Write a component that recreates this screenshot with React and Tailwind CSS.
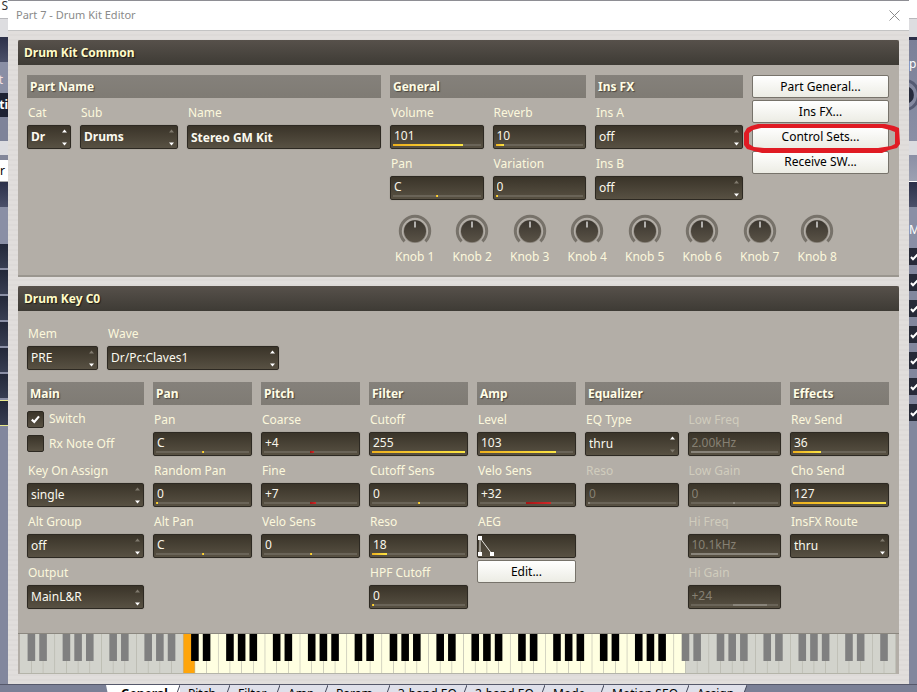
import { useId } from 'react';
import clsx from 'clsx';

const knobs = ['Knob 1', 'Knob 2', 'Knob 3', 'Knob 4', 'Knob 5', 'Knob 6', 'Knob 7', 'Knob 8'];

const tabs = [
  { name: 'General', width: 'w-[74px]', active: true },
  { name: 'Pitch', width: 'w-[50px]' },
  { name: 'Filter', width: 'w-[50px]' },
  { name: 'Amp', width: 'w-[48px]' },
  { name: 'Param', width: 'w-[62px]' },
  { name: '3-band EQ', width: 'w-[77px]' },
  { name: '2-band EQ', width: 'w-[78px]' },
  { name: 'Mode', width: 'w-[59px]' },
  { name: 'Motion SEQ', width: 'w-[85px]' },
  { name: 'Assign', width: 'w-[58px]' },
];

const fieldBox =
  'relative h-6 w-full rounded-xs border border-[#2d2922] bg-linear-to-b from-[#3a3429] to-[#585143] shadow-[0_0_1px_#6d6860]';

// White keys 14..56 (C0..C6) can be assigned
const FIRST_KEY = 14;
const LAST_KEY = 56;
const WHITE_KEYS = 75;

function Field({ label, disabled, className, children }) {
  const id = useId();
  return (
    <div className={className}>
      <label
        htmlFor={id}
        className={clsx('flex h-[27px] items-center whitespace-nowrap pl-px pt-0.5', disabled ? 'text-[#d0ccbd]' : 'text-[#fcf8dc]')}
      >
        {label}
      </label>
      {children(id)}
    </div>
  );
}

// start and size are percentages of the track
function ValueField({ label, value, start = 0, size = 0, color = 'yellow', disabled }) {
  return (
    <Field label={label} disabled={disabled}>
      {(id) => (
        <div className={fieldBox}>
          <input
            id={id}
            defaultValue={value}
            disabled={disabled}
            className={clsx('block h-[18px] w-full bg-transparent pl-[3px] outline-none', disabled ? 'text-[#868073]' : 'text-[#f8f5ea]')}
          />
          <div className="absolute inset-x-[2px] bottom-[2px] flex h-[2px] items-stretch bg-[#6a6458]">
            <div style={{ width: `${start}%` }} />
            <div
              className={clsx(
                'min-w-[2px]',
                disabled && 'bg-[#89847a]',
                !disabled && color === 'yellow' && 'bg-linear-to-r from-[#eeb01c] to-[#fbe444]',
                !disabled && color === 'red' && 'bg-linear-to-r from-[#a51515] to-[#d22a2a]',
              )}
              style={{ width: `${size}%` }}
            />
          </div>
        </div>
      )}
    </Field>
  );
}

function SelectField({ label, value, up = false, down = true, bold, className }) {
  return (
    <Field label={label} className={className}>
      {(id) => (
        <div className={fieldBox}>
          <select
            id={id}
            defaultValue={value}
            className={clsx('block h-[22px] w-full appearance-none bg-transparent pl-[3px] text-[#fbf9ef] outline-none', bold && 'font-bold')}
          >
            <option>{value}</option>
          </select>
          <svg viewBox="0 0 5 17" className="pointer-events-none absolute right-[3px] top-[3px] h-[17px] w-[5px]">
            <path d="M0 3.5 2.5 .5 5 3.5Z" fill={up ? '#fff' : '#807a6e'} />
            <path d="M0 13.5 2.5 16.5 5 13.5Z" fill={down ? '#fff' : '#807a6e'} />
          </svg>
        </div>
      )}
    </Field>
  );
}

function CheckField({ label, checked }) {
  return (
    <label className="flex flex-1 items-center gap-[5px] whitespace-nowrap text-[#fcf8dc]">
      <span className="relative size-[17px]">
        <input
          type="checkbox"
          defaultChecked={checked}
          className="peer block size-full appearance-none rounded-xs border border-[#2d2922] bg-linear-to-b from-[#3a3429] to-[#585143]"
        />
        <svg viewBox="0 0 17 17" className="pointer-events-none absolute inset-0 hidden peer-checked:block">
          <path d="M4.8 8.6 7.3 11 12 5.4" fill="none" stroke="#fff" strokeWidth="2.2" />
        </svg>
      </span>
      {label}
    </label>
  );
}

function SectionTitle({ children }) {
  return (
    <h3 className="flex h-[23px] items-center bg-linear-to-b from-[#85817b] to-[#7f7b74] pl-[3px] font-bold text-[#fffde6] [text-shadow:1px_1px_1px_#4a463f]">
      {children}
    </h3>
  );
}

function Section({ title, children }) {
  return (
    <section className="min-w-0">
      <SectionTitle>{title}</SectionTitle>
      {children}
    </section>
  );
}

function PanelTitle({ children }) {
  return (
    <h2 className="flex h-[25px] items-center rounded-t-xs bg-linear-to-b from-[#57514b] to-[#3e3b35] pl-1.5 font-bold text-[#fffcc8] [text-shadow:1px_1px_1px_#1d1b17]">
      {children}
    </h2>
  );
}

function PushButton({ children }) {
  return (
    <button
      type="button"
      className="block h-[23px] w-full rounded-xs border border-[#77736b] bg-linear-to-b from-white to-[#ecece4] text-center leading-5 text-black"
    >
      {children}
    </button>
  );
}

function Knob({ label }) {
  return (
    <div className="flex flex-col items-center text-[#fcf8dc]">
      <svg viewBox="0 0 34 34" className="size-[34px]" role="slider" aria-label={label} aria-valuenow={64}>
        <defs>
          <linearGradient id="knobFace" x1="0" y1="0" x2="0" y2="1">
            <stop offset="0" stopColor="#3b362f" />
            <stop offset="1" stopColor="#5a5347" />
          </linearGradient>
        </defs>
        <path d="M6.6 27.4A14.7 14.7 0 1 1 27.4 27.4" fill="none" stroke="#77726a" strokeWidth="3" />
        <circle cx="17" cy="17.5" r="11.6" fill="#8f8a82" />
        <circle cx="17" cy="17.3" r="11" fill="url(#knobFace)" />
        <path d="M17 7.5v6" stroke="#fff" strokeWidth="1.2" />
      </svg>
      <span className="flex h-[18px] items-center whitespace-nowrap">{label}</span>
    </div>
  );
}

function Keyboard() {
  const whites = Array.from({ length: WHITE_KEYS }, (_, i) => i);
  const blacks = whites.filter((i) => [0, 1, 3, 4, 5].includes(i % 7) && i < WHITE_KEYS - 1);
  const whiteFill = (i) => {
    if (i === FIRST_KEY) return '#ffa50a';
    return i > FIRST_KEY && i <= LAST_KEY ? '#ffffe1' : '#d2d3cc';
  };

  return (
    <div className="border-t border-[#8b877f] bg-[#b3aea7] pl-[2px] pr-[3px]">
      <svg viewBox="0 0 1500 40" preserveAspectRatio="none" className="block h-10 w-full">
        {whites.map((i) => (
          <g key={i}>
            <rect x={i * 20} width="20" height="40" fill={whiteFill(i)} />
            <rect x={i * 20 + 19} width="1.5" height="40" fill="#b4b4a9" />
          </g>
        ))}
        <rect y="39" width="1500" height="1" fill="#b4b4a9" />
        {blacks.map((i) => (
          <rect
            key={i}
            x={i * 20 + 13}
            width="13"
            height="27"
            fill={i >= FIRST_KEY && i < LAST_KEY ? '#000' : '#808080'}
          />
        ))}
      </svg>
    </div>
  );
}

function LeftEdge() {
  return (
    <div className="flex w-2 shrink-0 flex-col overflow-hidden text-white">
      <div className="flex h-[18px] justify-end bg-white leading-3 text-[#333]">S</div>
      <div className="h-[19px] border-t border-[#b8b8bc] bg-[#dddde0]" />
      <div className="h-[25px] bg-linear-to-b from-[#2c3049] to-[#4b5069]" />
      <div className="flex h-[31px] items-center justify-end bg-[#8a8fa5] pr-[5px] pt-1 text-[#f3dfe0]">t</div>
      <div className="flex h-6 items-center justify-end bg-[#1e2233] font-bold">sti</div>
      <div className="h-6 bg-[#7e8399]" />
      <div className="h-[14px] bg-[#dcdce0]" />
      <div className="h-[5px] bg-[#83879a]" />
      <div className="flex h-[21px] items-center justify-end bg-white pr-[3px] text-black">or</div>
      <div className="h-[26px] border-t border-[#aaa] bg-linear-to-b from-[#2c3049] to-[#4b5069]" />
      <div className="h-[37px] bg-[#8a8fa5]" />
      {[0, 1, 2, 3, 4, 5].map((row) => (
        <div key={row} className="h-[26px] border-b-2 border-[#8a8fa5] bg-linear-to-b from-[#232839] to-[#383e52]" />
      ))}
      <div className="h-[26px] border-y border-[#e9e98a] bg-linear-to-b from-[#232839] to-[#383e52]" />
      <div className="flex-1 bg-[#82879d]" />
    </div>
  );
}

function RightEdge() {
  return (
    <div className="flex w-2 shrink-0 flex-col overflow-hidden text-white">
      <div className="h-[18px] bg-white" />
      <div className="h-[19px] border-t border-[#b8b8bc] bg-[#dddde0]" />
      <div className="h-[3px] bg-[#2c3049]" />
      <div className="flex h-[101px] flex-col bg-linear-to-b from-[#7b8098] to-[#8a8fa5]">
        <span className="h-[38px] pt-4">p</span>
        <svg viewBox="0 0 8 34" className="h-[34px] w-2">
          <path d="M0 3A15 15 0 0 1 0 31" fill="none" stroke="#555b73" strokeWidth="3" />
          <path d="M0 9A9 9 0 0 1 0 25Z" fill="#262b3d" />
        </svg>
      </div>
      <div className="h-[14px] bg-[#dcdce0]" />
      <div className="h-[26px] bg-linear-to-b from-[#8a8fa5] to-[#9da1b2]" />
      <div className="h-[26px] border-t border-white bg-linear-to-b from-[#2c3049] to-[#4b5069]" />
      <div className="flex h-[41px] items-center bg-[#8a8fa5] pt-1">M</div>
      {[0, 1, 2, 3, 4, 5, 6].map((row) => (
        <div key={row} className="h-[26px] bg-[#82879d]">
          <svg viewBox="0 0 8 17" className="h-[17px] w-2 bg-[#262a38]">
            <path d="M2 9 4 11.2 8.5 6.5" fill="none" stroke="#fff" strokeWidth="2" />
          </svg>
        </div>
      ))}
      <div className="flex-1 bg-[#82879d]" />
    </div>
  );
}

function TabBar() {
  return (
    <nav className="flex h-6 shrink-0 border-t border-[#55586a] bg-[#7b8096] pl-[106px]">
      {tabs.map((tab, index) => (
        <a
          key={tab.name}
          href="#"
          className={clsx('relative flex h-6 shrink-0 items-start whitespace-nowrap bg-[#dfe0ea] pl-2 pt-px text-black', tab.width, tab.active && 'bg-white pl-[15px] font-bold')}
        >
          {tab.name}
          {index === 0 && (
            <svg viewBox="0 0 5 24" className="absolute left-0 top-0 h-6 w-[5px]">
              <path d="M0 0 5 24H0Z" fill="#7b8096" />
            </svg>
          )}
          <svg viewBox="0 0 10 24" className="absolute right-0 top-0 h-6 w-2.5">
            {index === tabs.length - 1 && <path d="M10 0 1 24H10Z" fill="#7b8096" />}
            <path d="M10 0 1 24" stroke="#44475a" />
          </svg>
        </a>
      ))}
    </nav>
  );
}

function DrumKitCommon() {
  return (
    <section className="border-b-2 border-[#9a968f] bg-[#b3aea7]">
      <PanelTitle>Drum Kit Common</PanelTitle>
      <div className="grid grid-cols-[354fr_499fr] gap-[9px] pb-[9px] pl-[9px] pr-2.5 pt-2.5">
        <Section title="Part Name">
          <div className="grid grid-cols-[44fr_98fr_194fr] gap-[9px]">
            <SelectField label="Cat" value="Dr" up bold />
            <SelectField label="Sub" value="Drums" bold />
            <Field label="Name">
              {(id) => (
                <div className={fieldBox}>
                  <input
                    id={id}
                    defaultValue="Stereo GM Kit"
                    className="block h-[22px] w-full bg-transparent pl-[3px] font-bold text-[#fbf9ef] outline-none"
                  />
                </div>
              )}
            </Field>
          </div>
        </Section>

        <div className="min-w-0">
          <div className="grid grid-cols-[196fr_148fr_137fr] gap-[9px]">
            <Section title="General">
              <div className="grid grid-cols-2 gap-x-[9px]">
                <ValueField label="Volume" value="101" size={80} />
                <ValueField label="Reverb" value="10" size={10} />
                <ValueField label="Pan" value="C" start={49} />
                <ValueField label="Variation" value="0" />
              </div>
            </Section>
            <Section title="Ins FX">
              <SelectField label="Ins A" value="off" />
              <SelectField label="Ins B" value="off" />
            </Section>
            <div className="flex h-[99px] flex-col justify-between">
              <PushButton>Part General...</PushButton>
              <PushButton>Ins FX...</PushButton>
              <div className="relative">
                <PushButton>Control Sets...</PushButton>
                <svg
                  viewBox="0 0 156 29"
                  preserveAspectRatio="none"
                  className="pointer-events-none absolute -left-2 -top-[2px] h-[29px] w-[calc(100%+19px)] max-w-none"
                >
                  <path
                    fill="#e01b24"
                    fillRule="evenodd"
                    d="M0 9 3 4 7 2 14 0H141L150 2 155 4 156 20 153 24 145 26 138 29H18L10 27 3 25 0 21ZM5 9V20L10 23 20 24H134L147 22 151 20V8L146 6 138 4H17L9 6Z"
                  />
                </svg>
              </div>
              <PushButton>Receive SW...</PushButton>
            </div>
          </div>
          <div className="-ml-1 mt-[14px] grid w-[460px] grid-cols-8">
            {knobs.map((name) => (
              <Knob key={name} label={name} />
            ))}
          </div>
        </div>
      </div>
    </section>
  );
}

function DrumKey() {
  return (
    <section className="bg-[#b3aea7]">
      <PanelTitle>Drum Key C0</PanelTitle>
      <div className="pb-6 pl-[9px] pr-2.5 pt-2">
        <div className="flex gap-[9px]">
          <SelectField label="Mem" value="PRE" className="w-[71px]" />
          <SelectField label="Wave" value="Dr/Pc:Claves1" up className="w-[172px]" />
        </div>

        <div className="mt-3 grid grid-cols-[117fr_99fr_99fr_99fr_99fr_196fr_99fr] gap-[9px]">
          <Section title="Main">
            <div className="flex h-[51px] flex-col pt-0.5">
              <CheckField label="Switch" checked />
              <CheckField label="Rx Note Off" />
            </div>
            <SelectField label="Key On Assign" value="single" />
            <SelectField label="Alt Group" value="off" />
            <SelectField label="Output" value="MainL&R" />
          </Section>

          <Section title="Pan">
            <ValueField label="Pan" value="C" start={49} />
            <ValueField label="Random Pan" value="0" />
            <ValueField label="Alt Pan" value="C" start={49} />
          </Section>

          <Section title="Pitch">
            <ValueField label="Coarse" value="+4" start={49} size={5} color="red" />
            <ValueField label="Fine" value="+7" start={49} size={7} color="red" />
            <ValueField label="Velo Sens" value="0" start={49} />
          </Section>

          <Section title="Filter">
            <ValueField label="Cutoff" value="255" size={100} />
            <ValueField label="Cutoff Sens" value="0" start={49} />
            <ValueField label="Reso" value="18" size={16} />
            <ValueField label="HPF Cutoff" value="0" />
          </Section>

          <Section title="Amp">
            <ValueField label="Level" value="103" size={82} />
            <ValueField label="Velo Sens" value="+32" start={49} size={27} color="red" />
            <Field label="AEG">
              {(id) => (
                <div id={id} className={fieldBox}>
                  <svg viewBox="0 0 18 22" className="block h-[22px] w-[18px]">
                    <path d="M2 19V3L14 19" fill="none" stroke="#e8e6e0" />
                    <path d="M0 1h4v4H0ZM0 17h4v4H0ZM12 17h4v4h-4Z" fill="#fff" />
                  </svg>
                </div>
              )}
            </Field>
            <div className="mt-[2px]">
              <PushButton>Edit...</PushButton>
            </div>
          </Section>

          <Section title="Equalizer">
            <div className="grid grid-cols-2 gap-x-[9px]">
              <div>
                <SelectField label="EQ Type" value="thru" up down={false} />
                <ValueField label="Reso" value="0" disabled />
              </div>
              <div>
                <ValueField label="Low Freq" value="2.00kHz" size={68} disabled />
                <ValueField label="Low Gain" value="0" start={49} disabled />
                <ValueField label="Hi Freq" value="10.1kHz" size={100} disabled />
                <ValueField label="Hi Gain" value="+24" start={49} size={38} disabled />
              </div>
            </div>
          </Section>

          <Section title="Effects">
            <ValueField label="Rev Send" value="36" size={30} />
            <ValueField label="Cho Send" value="127" size={100} />
            <SelectField label="InsFX Route" value="thru" />
          </Section>
        </div>
      </div>
      <Keyboard />
    </section>
  );
}

export default function App() {
  return (
    <div className="flex h-screen flex-col overflow-hidden bg-[#7b8096] font-['Noto_Sans','Open_Sans',sans-serif] text-xs">
      <div className="flex shrink-0">
        <LeftEdge />
        <main className="min-w-0 flex-1 border-t border-[#8e8e94] bg-[#dfdcda] bg-[repeating-linear-gradient(to_bottom,#e1dedc_0px,#e1dedc_3px,#dddad8_3px,#dddad8_5px)]">
          <header className="flex h-[30px] items-center justify-between border-b border-[#c4c4c4] bg-white pl-2 pr-[9px]">
            <h1 className="text-[11px] text-[#8a8a8a]">Part 7 - Drum Kit Editor</h1>
            <button type="button" aria-label="Close" className="size-[11px]">
              <svg viewBox="0 0 11 11" className="block size-full">
                <path d="M.5 .5 10.5 10.5M10.5 .5 .5 10.5" stroke="#8a8a8a" />
              </svg>
            </button>
          </header>
          <div className="flex flex-col gap-[9px] p-2.5 pt-[9px]">
            <DrumKitCommon />
            <DrumKey />
          </div>
        </main>
        <RightEdge />
      </div>
      <TabBar />
    </div>
  );
}
